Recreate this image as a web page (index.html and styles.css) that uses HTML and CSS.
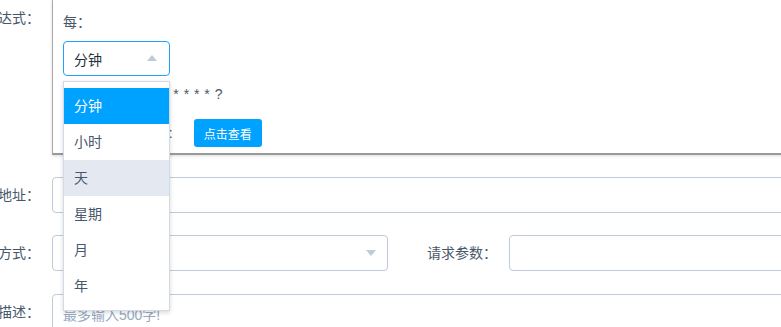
FILE: index.html
```html
<html>
	<head>
		<title>任务编辑</title>
		<link rel="stylesheet" href="styles.css">
	</head>
	<body>
		<div class="form">
			<div class="row">
				<div class="label"><span>cron表达式：</span></div>
				<div class="cronpanel">
					<div class="line">每：</div>
					<div class="unitwrap">
						<div class="select focus">
							<span>分钟</span>
							<i class="caret up"></i>
						</div>
						<ul class="dropdown">
							<li class="selected">分钟</li>
							<li>小时</li>
							<li class="hover">天</li>
							<li>星期</li>
							<li>月</li>
							<li>年</li>
						</ul>
					</div>
					<div class="line result">生成的表达式：<span class="stars">* * * * * ?</span></div>
					<div class="line runs">
						<span>最近5次运行时间:</span>
						<button class="btn">点击查看</button>
					</div>
				</div>
			</div>
			<div class="row">
				<div class="label"><span>请求地址：</span></div>
				<div class="input wide"></div>
			</div>
			<div class="row method-row">
				<div class="label"><span>请求方式：</span></div>
				<div class="select method">
					<span></span>
					<i class="caret down"></i>
				</div>
				<div class="label second"><span>请求参数：</span></div>
				<div class="input wide"></div>
			</div>
			<div class="row">
				<div class="label"><span>任务描述：</span></div>
				<div class="textarea"><span class="placeholder">最多输入500字!</span></div>
			</div>
		</div>
	</body>
</html>
```

FILE: styles.css
```css
body{
	margin: 0;
	overflow: hidden;
	font-family: "Liberation Sans", "Noto Sans CJK SC", sans-serif;
	font-size: 14px;
	color: #48576a;
	background-color: #ffffff;
}
.form{
	width: 860px;
}
.row{
	display: flex;
	align-items: flex-start;
	margin-bottom: 22px;
}
.method-row{
	margin-bottom: 23px;
}
.label{
	display: flex;
	justify-content: flex-end;
	flex-shrink: 0;
	width: 40px;
	padding-right: 12px;
	line-height: 36px;
	white-space: nowrap;
	color: #48576a;
}
.label.second{
	width: 88px;
	margin-left: 21px;
}
.cronpanel{
	flex: 1;
	height: 155px;
	box-sizing: border-box;
	padding: 12px 10px 0 10px;
	border-left: 1px solid #a9a9a9;
	border-bottom: 2px solid #9a9a9a;
	box-shadow: 0 1px 3px rgba(0,0,0,0.15);
}
.line{
	line-height: 20px;
	color: #48576a;
}
.unitwrap{
	position: relative;
	margin-top: 9px;
	width: 107px;
}
.select{
	display: flex;
	align-items: center;
	justify-content: space-between;
	box-sizing: border-box;
	height: 36px;
	padding: 0 11px 0 10px;
	border: 1px solid #bfcbd9;
	border-radius: 4px;
	color: #1f2d3d;
}
.select.focus{
	height: 35px;
	border-color: #20a0ff;
}
.select.method{
	width: 336px;
	flex-shrink: 0;
}
.caret{
	width: 0;
	height: 0;
	border-left: 5.5px solid transparent;
	border-right: 5.5px solid transparent;
}
.caret.up{
	border-bottom: 6px solid #bfcbd9;
	margin-right: 1px;
	margin-bottom: 2px;
}
.caret.down{
	border-top: 6px solid #bfcbd9;
}
.dropdown{
	position: absolute;
	top: 40px;
	left: 0;
	width: 107px;
	box-sizing: border-box;
	margin: 0;
	padding: 6px 0;
	list-style: none;
	background-color: #ffffff;
	border: 1px solid #d1dbe5;
	box-shadow: 0 2px 4px rgba(0,0,0,0.12), 0 0 6px rgba(0,0,0,0.04);
	z-index: 10;
}
.dropdown li{
	height: 36px;
	line-height: 36px;
	padding: 0 10px;
	color: #48576a;
}
.dropdown li.selected{
	background-color: #00a2ff;
	color: #ffffff;
}
.dropdown li.hover{
	background-color: #e4e8f1;
}
.result{
	margin-top: 8px;
}
.stars{
	margin-left: 2px;
	letter-spacing: 0.5px;
}
.runs{
	display: flex;
	align-items: center;
	margin-top: 15px;
}
.btn{
	margin-left: 21px;
	height: 28px;
	padding: 0 10px;
	border: none;
	border-radius: 3px;
	background-color: #00a2ff;
	color: #ffffff;
	font-family: "Liberation Sans", "Noto Sans CJK SC", sans-serif;
	font-size: 12px;
}
.input{
	box-sizing: border-box;
	height: 36px;
	border: 1px solid #bfcbd9;
	border-radius: 4px;
}
.wide{
	flex: 1;
}
.textarea{
	flex: 1;
	box-sizing: border-box;
	height: 60px;
	padding: 5px 10px;
	border: 1px solid #bfcbd9;
	border-radius: 4px;
	line-height: 30px;
}
.placeholder{
	color: #97a8be;
}
```
